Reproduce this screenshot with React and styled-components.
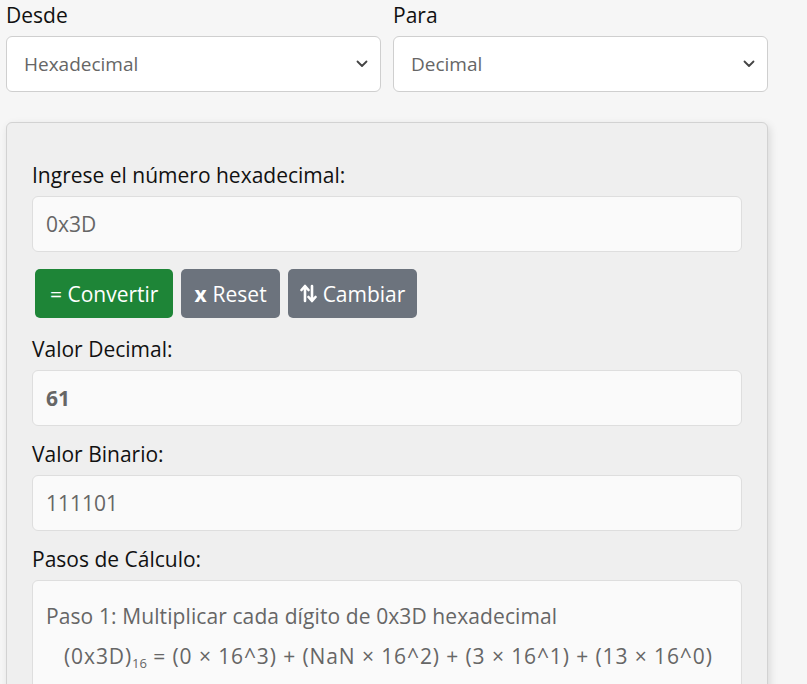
import React from 'react'
import styled, { createGlobalStyle } from 'styled-components'

const GlobalStyle = createGlobalStyle`
  html, body {
    margin: 0;
    padding: 0;
    background: #f6f6f6;
    font-family: 'Segoe UI', 'Open Sans', sans-serif;
    color: #111;
  }
  * { box-sizing: border-box; }
`

const Wrapper = styled('div')`
  width: 762px;
  margin-left: 6px;
`

const SelectRow = styled('div')`
  display: grid;
  grid-template-columns: 1fr 1fr;
  column-gap: 12px;
  margin-bottom: 30px;
`

const Field = styled('div')`
  display: flex;
  flex-direction: column;
`

const Label = styled('label')`
  display: block;
  font-size: 21px;
  line-height: 30px;
  height: 30px;
  margin-bottom: 6px;
  color: #111;
`

const SelectBox = styled('div')`
  height: 56px;
  background: #fff;
  border: 1px solid #cfcfcf;
  border-radius: 6px;
  display: flex;
  align-items: center;
  justify-content: space-between;
  padding: 0 12px 0 17px;
  font-size: 19px;
  color: #666;
`

const Card = styled('div')`
  background: #efefef;
  border: 1px solid #d2d2d2;
  border-radius: 6px;
  box-shadow: 2px 3px 8px rgba(0, 0, 0, 0.12);
  padding: 37px 25px 40px 25px;
`

const Group = styled('div')`
  margin-bottom: ${(p) => p.gap ?? 13}px;
`

const Box = styled('div')`
  min-height: 56px;
  background: #fafafa;
  border: 1px solid #dedede;
  border-radius: 6px;
  display: flex;
  align-items: center;
  padding: 0 13px;
  font-size: 21px;
  color: #666;
  font-weight: ${(p) => (p.bold ? 700 : 400)};
`

const StepsBox = styled('div')`
  background: #fafafa;
  border: 1px solid #dedede;
  border-radius: 6px;
  padding: 20px 13px 40px 13px;
  font-size: 21px;
  color: #666;
`

const StepLine = styled('div')`
  line-height: 30px;
  margin-bottom: 10px;
  padding-left: ${(p) => (p.indent ? 18 : 0)}px;
  letter-spacing: ${(p) => (p.indent ? 0.9 : 0.1)}px;
  white-space: nowrap;
`

const Sub = styled('span')`
  font-size: 13px;
  letter-spacing: 0;
  position: relative;
  top: 4px;
`

const ButtonRow = styled('div')`
  display: flex;
  gap: 8px;
  padding-left: 3px;
  margin-top: 17px;
  margin-bottom: 16px;
`

const Button = styled('button')`
  height: 49px;
  border: none;
  border-radius: 5px;
  padding: 0 ${(p) => p.pad || 14}px;
  font-family: inherit;
  font-size: 21px;
  color: #fff;
  background: ${(p) => (p.variant === 'green' ? '#1e8537' : '#6c737d')};
  display: flex;
  align-items: center;
  gap: 6px;
`

const Bold = styled('span')`
  font-weight: 700;
`

const Chevron = () => (
  <svg width="12" height="8" viewBox="0 0 12 8">
    <path d="M1.5 1.5 L6 6 L10.5 1.5" fill="none" stroke="#444" strokeWidth="1.8" strokeLinecap="round" strokeLinejoin="round" />
  </svg>
)

const SwapIcon = () => (
  <svg width="17" height="19" viewBox="0 0 17 19">
    <g fill="none" stroke="#fff" strokeWidth="2.6" strokeLinecap="round" strokeLinejoin="round">
      <path d="M5 17 L5 2.5 M1.5 6 L5 2 L8.5 6" />
      <path d="M12 2 L12 16.5 M8.5 13 L12 17 L15.5 13" />
    </g>
  </svg>
)

const App = () => {
  return (
    <Wrapper>
      <GlobalStyle />
      <SelectRow>
        <Field>
          <Label>Desde</Label>
          <SelectBox>
            <span>Hexadecimal</span>
            <Chevron />
          </SelectBox>
        </Field>
        <Field>
          <Label>Para</Label>
          <SelectBox>
            <span>Decimal</span>
            <Chevron />
          </SelectBox>
        </Field>
      </SelectRow>

      <Card>
        <Group gap={0}>
          <Label>Ingrese el número hexadecimal:</Label>
          <Box>0x3D</Box>
        </Group>
        <ButtonRow>
          <Button variant="green" pad={15}>= Convertir</Button>
          <Button pad={13}>
            <Bold>x</Bold> Reset
          </Button>
          <Button pad={12}>
            <SwapIcon /> Cambiar
          </Button>
        </ButtonRow>
        <Group>
          <Label>Valor Decimal:</Label>
          <Box bold>61</Box>
        </Group>
        <Group>
          <Label>Valor Binario:</Label>
          <Box>111101</Box>
        </Group>
        <Group>
          <Label>Pasos de Cálculo:</Label>
          <StepsBox>
            <StepLine>Paso 1: Multiplicar cada dígito de 0x3D hexadecimal</StepLine>
            <StepLine indent>
              (0x3D)<Sub>16</Sub> = (0 × 16^3) + (NaN × 16^2) + (3 × 16^1) + (13 × 16^0)
            </StepLine>
          </StepsBox>
        </Group>
      </Card>
    </Wrapper>
  )
}

export default App
